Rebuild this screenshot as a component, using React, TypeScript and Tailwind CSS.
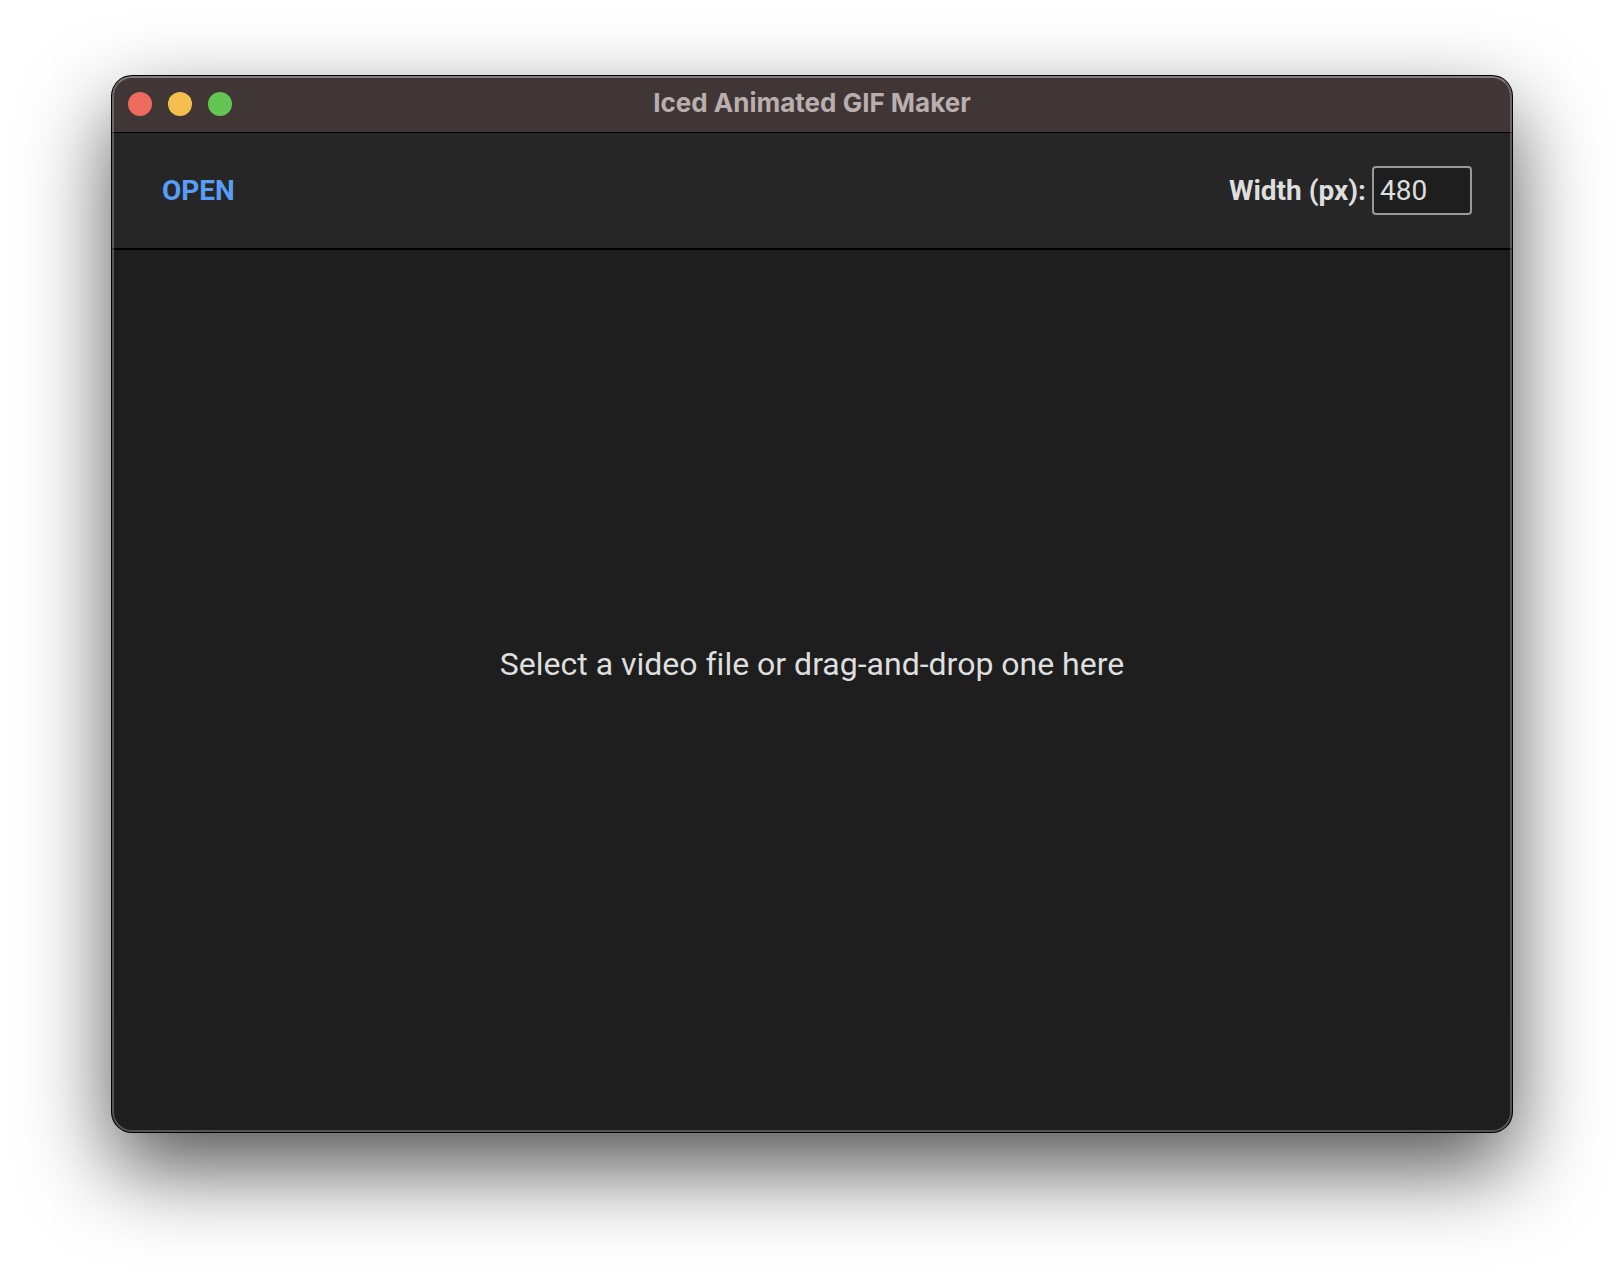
import { useState } from "react";

const lights = [
  { label: "Close", color: "bg-[#ed6a5f]" },
  { label: "Minimize", color: "bg-[#f5bf4f]" },
  { label: "Zoom", color: "bg-[#62c554]" },
];

export default function App() {
  const [width, setWidth] = useState("480");

  return (
    <div className="flex min-h-screen bg-white px-28 pt-[76px] pb-[148px] font-['Roboto',sans-serif]">
      <div className="relative flex flex-1 flex-col overflow-hidden rounded-[20px] bg-[#1e1e1e] text-[#dedede] shadow-[0_0_0_1px_#000,0_36px_86px_rgba(0,0,0,0.68)]">
        <header className="grid h-14 shrink-0 grid-cols-[1fr_auto_1fr] items-center bg-[#403636] px-4">
          <div className="flex gap-4">
            {lights.map((light) => (
              <button
                key={light.label}
                type="button"
                aria-label={light.label}
                className={`size-6 rounded-full ${light.color}`}
              />
            ))}
          </div>
          <h1 className="pb-0.5 font-['Inter',sans-serif] text-[26px] leading-8 font-bold text-[#b9afaf]">
            Iced Animated GIF Maker
          </h1>
        </header>

        <div className="flex h-[118px] shrink-0 items-center justify-between border-t border-b-2 border-black bg-[#262626] px-10 text-[28px] leading-8 font-bold">
          <button type="button" className="px-2.5 text-[#589df6]">
            OPEN
          </button>
          <div className="flex items-center gap-1.5">
            <label htmlFor="gif-width">Width (px):</label>
            <input
              id="gif-width"
              type="text"
              inputMode="numeric"
              value={width}
              onChange={(event) => setWidth(event.target.value)}
              className="h-[49px] w-[100px] rounded-[4px] border-2 border-[#999999] bg-[#1e1e1e] px-1.5 font-normal outline-none"
            />
          </div>
        </div>

        <main className="flex flex-1 items-center justify-center pb-[54px]">
          <p className="text-[32px] leading-10 [font-variant-ligatures:none]">
            Select a video file or drag-and-drop one here
          </p>
        </main>

        <div className="pointer-events-none absolute inset-0 rounded-[20px] border-2 border-white/25 border-t-white/35" />
      </div>
    </div>
  );
}
